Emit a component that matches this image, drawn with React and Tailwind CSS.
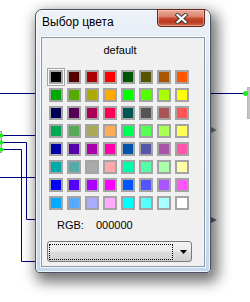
import React from "react";

const swatches = [
  "bg-[#000000]", "bg-[#550000]", "bg-[#aa0000]", "bg-[#ff0000]", "bg-[#005500]", "bg-[#555500]", "bg-[#aa5500]", "bg-[#ff5500]",
  "bg-[#00aa00]", "bg-[#55aa00]", "bg-[#aaaa00]", "bg-[#ffaa00]", "bg-[#00ff00]", "bg-[#55ff00]", "bg-[#aaff00]", "bg-[#ffff00]",
  "bg-[#000055]", "bg-[#550055]", "bg-[#aa0055]", "bg-[#ff0055]", "bg-[#005555]", "bg-[#555555]", "bg-[#aa5555]", "bg-[#ff5555]",
  "bg-[#00aa55]", "bg-[#55aa55]", "bg-[#aaaa55]", "bg-[#ffaa55]", "bg-[#00ff55]", "bg-[#55ff55]", "bg-[#aaff55]", "bg-[#ffff55]",
  "bg-[#0000aa]", "bg-[#5500aa]", "bg-[#aa00aa]", "bg-[#ff00aa]", "bg-[#0055aa]", "bg-[#5555aa]", "bg-[#aa55aa]", "bg-[#ff55aa]",
  "bg-[#00aaaa]", "bg-[#55aaaa]", "bg-[#aaaaaa]", "bg-[#ffaaaa]", "bg-[#00ffaa]", "bg-[#55ffaa]", "bg-[#aaffaa]", "bg-[#ffffaa]",
  "bg-[#0000ff]", "bg-[#5500ff]", "bg-[#aa00ff]", "bg-[#ff00ff]", "bg-[#0055ff]", "bg-[#5555ff]", "bg-[#aa55ff]", "bg-[#ff55ff]",
  "bg-[#00aaff]", "bg-[#55aaff]", "bg-[#aaaaff]", "bg-[#ffaaff]", "bg-[#00ffff]", "bg-[#55ffff]", "bg-[#aaffff]", "bg-[#ffffff]",
];

function Background() {
  const navy = "#00007a";
  return (
    <svg className="absolute left-0 top-0" width="250" height="302" viewBox="0 0 250 302">
      <path d="M0 93.5H36" stroke={navy} strokeWidth="1" fill="none" />
      <path d="M0 177.5H36" stroke={navy} strokeWidth="1" fill="none" />
      <path d="M3 135.5H36" stroke={navy} strokeWidth="1" fill="none" />
      <path d="M3 142.5H26.5V219.5H36" stroke={navy} strokeWidth="1" fill="none" />
      <path d="M3 149.5H21.5V261.5H36" stroke={navy} strokeWidth="1" fill="none" />
      <rect x="-1" y="131.5" width="2.5" height="21" fill="#d0d0d0" stroke="#a0a0a0" strokeWidth="1" />
      <circle cx="1.5" cy="135.5" r="2" fill="#19f019" />
      <circle cx="1.5" cy="142.5" r="2" fill="#19f019" />
      <circle cx="1.5" cy="149.5" r="2" fill="#19f019" />
      <path d="M208 93.5H245" stroke={navy} strokeWidth="1" fill="none" />
      <rect x="247.5" y="87.5" width="4" height="31" fill="#c4c4c4" stroke="#8c8c8c" strokeWidth="1" strokeDasharray="1 1" />
      <circle cx="245.5" cy="93.5" r="2.5" fill="#19f019" />
      <path d="M205 124L217 130L205 136Z" fill="#6c7c80" opacity="0.85" />
      <path d="M205 214L217 220L205 226Z" fill="#5c6470" opacity="0.9" />
    </svg>
  );
}

export default function App() {
  return (
    <div className="relative w-[250px] h-[302px] bg-white overflow-hidden font-['Liberation_Sans',Arial,sans-serif]">
      <Background />
      <div className="absolute left-[35px] top-[9px] w-[176px] h-[264px] rounded-t-[7px] rounded-b-[4px] border border-[#4a5260] bg-[linear-gradient(to_bottom,#edf2f8_0%,#e1eaf4_20%,#cfdff0_60%,#c3d7ee_100%)] shadow-[inset_0_0_0_1px_rgba(255,255,255,0.75),4px_6px_14px_3px_rgba(0,0,0,0.55)] flex flex-col">
        <div className="relative h-[27px] shrink-0">
          <span className="block pl-[6px] pt-[5px] text-[12px] leading-[15px] text-black [text-shadow:0_0_6px_#ffffff]">
            Выбор цвета
          </span>
          <div className="absolute right-[5px] top-[-1px] w-[48px] h-[18px] rounded-b-[4px] border border-[#6a2418] bg-[linear-gradient(to_bottom,#e9ab9b_0%,#dc8670_40%,#c74a30_52%,#b93a22_75%,#d26a4e_100%)] shadow-[inset_0_0_0_1px_rgba(255,220,210,0.45)] flex items-center justify-center">
            <svg width="13" height="11" viewBox="0 0 13 11">
              <path d="M2.5 2L10.5 9M10.5 2L2.5 9" stroke="#3a3a3a" strokeWidth="4" strokeLinecap="square" />
              <path d="M2.5 2L10.5 9M10.5 2L2.5 9" stroke="#ffffff" strokeWidth="2.2" strokeLinecap="square" />
            </svg>
          </div>
        </div>
        <div className="mx-[5px] h-[230px] border border-[#8e9aa8] bg-[#f0f0f0] shadow-[0_0_0_1px_rgba(255,255,255,0.8)] flex flex-col">
          <div className="pt-[6px] w-[156px] text-center text-[11px] leading-[13px] text-black">default</div>
          <div className="mt-[13px] ml-[7px] grid grid-cols-[repeat(8,14px)] gap-[4px]">
            {swatches.map((c, i) => (
              <div
                key={i}
                className={
                  i === 0
                    ? `w-[14px] h-[14px] border-2 border-[#a4a4a4] ${c} shadow-[0_0_0_1px_#fbfbfb,0_0_0_2px_#a4a4a4]`
                    : `w-[14px] h-[14px] border-2 border-[#a4a4a4] ${c}`
                }
              />
            ))}
          </div>
          <div className="mt-[9px] ml-[15px] flex text-[11px] leading-[13px] text-black">
            <span className="w-[39px]">RGB:</span>
            <span>000000</span>
          </div>
          <div className="mt-[9px] ml-[5px] w-[145px] h-[21px] rounded-[3px] border border-[#7a7a7a] bg-[linear-gradient(to_bottom,#f3f3f3_0%,#ebebeb_48%,#dddddd_52%,#d0d0d0_100%)] flex items-center">
            <div className="ml-[1px] w-[124px] h-[16px] border border-dotted border-black" />
            <svg className="ml-[7px]" width="7" height="4" viewBox="0 0 7 4">
              <path d="M0 0H7L3.5 4Z" fill="#000" />
            </svg>
          </div>
        </div>
      </div>
    </div>
  );
}
